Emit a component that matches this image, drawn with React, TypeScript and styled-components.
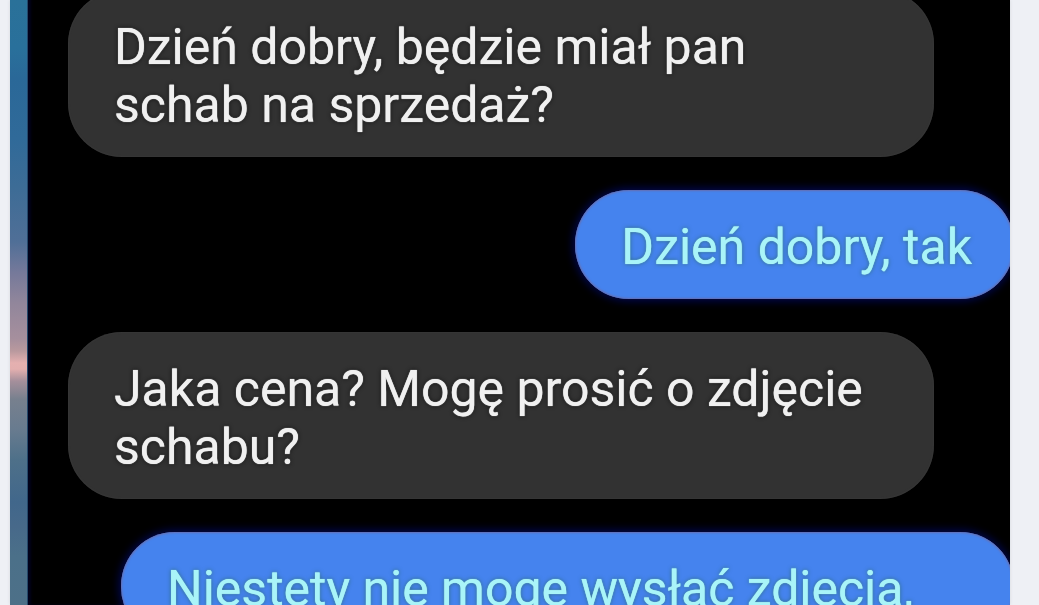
import React from "react";
import styled, { createGlobalStyle } from "styled-components";

const GlobalStyle = createGlobalStyle`
  * { box-sizing: border-box; }
  body { margin: 0; background: #eef0f5; }
`;

const Page = styled.main`
  display: flex;
  height: 100vh;
  padding: 0 29px 0 10px;
  overflow: hidden;
  font-family: Roboto, "Liberation Sans", sans-serif;
`;

const Photo = styled.section`
  display: flex;
  flex: 1;
  min-width: 0;
  overflow: hidden;
  background: #000;
  box-shadow: 0 0 3px #d5d7dd;
`;

const SkyStrip = styled.div`
  flex: 0 0 18px;
  border-right: 1px solid #24486a;
  background: linear-gradient(
    to bottom,
    #2a7199 0%,
    #29709b 8%,
    #2a6898 13%,
    #306a99 23%,
    #3d6c96 31%,
    #506f97 40%,
    #75799a 45%,
    #91869b 50%,
    #a68f9d 56%,
    #b9999e 58%,
    #e5b0b0 60%,
    #e3afaf 61%,
    #a58f9b 63%,
    #77808e 66%,
    #687b8f 71%,
    #4e7089 76%,
    #41678b 83%,
    #47698a 87%,
    #4b7089 92%,
    #4d7088 100%
  );
`;

const Thread = styled.div`
  display: flex;
  flex: 1;
  flex-direction: column;
  gap: 33px;
  min-width: 0;
  margin-top: -10px;
  padding-left: 40px;
  box-shadow: inset 3px 0 3px #02021c;
`;

const Bubble = styled.p<{ $outgoing?: boolean; $wide?: boolean }>`
  flex: none;
  align-self: ${(p) => (p.$outgoing ? "flex-end" : "stretch")};
  width: ${(p) => (p.$wide ? "calc(100% - 49px)" : "auto")};
  margin: 0 ${(p) => (p.$outgoing ? "-4px" : "76px")} 0 0;
  padding: 28px 42px 23px 46px;
  border-radius: 54px;
  background: ${(p) => (p.$outgoing ? "#4583ee" : "#323232")};
  color: ${(p) => (p.$outgoing ? "#a9f4f8" : "#f0f0f0")};
  font-size: 50px;
  line-height: 58px;
  white-space: nowrap;
  text-shadow: 0 0 1px currentColor, 0 0 4px ${(p) => (p.$outgoing ? "#2c6a78" : "#111")};
  box-shadow: ${(p) =>
    p.$outgoing ? "inset 0 0 2px 1px #686fae, 0 0 8px 2px #020852" : "inset 0 0 2px #414141"};
`;

export default function App() {
  return (
    <>
      <GlobalStyle />
      <Page>
        <Photo>
          <SkyStrip />
          <Thread>
            <Bubble>
              Dzień dobry, będzie miał pan
              <br />
              schab na sprzedaż?
            </Bubble>
            <Bubble $outgoing>Dzień dobry, tak</Bubble>
            <Bubble>
              Jaka cena? Mogę prosić o zdjęcie
              <br />
              schabu?
            </Bubble>
            <Bubble $outgoing $wide>
              Niestety nie mogę wysłać zdjęcia,
            </Bubble>
          </Thread>
        </Photo>
      </Page>
    </>
  );
}
